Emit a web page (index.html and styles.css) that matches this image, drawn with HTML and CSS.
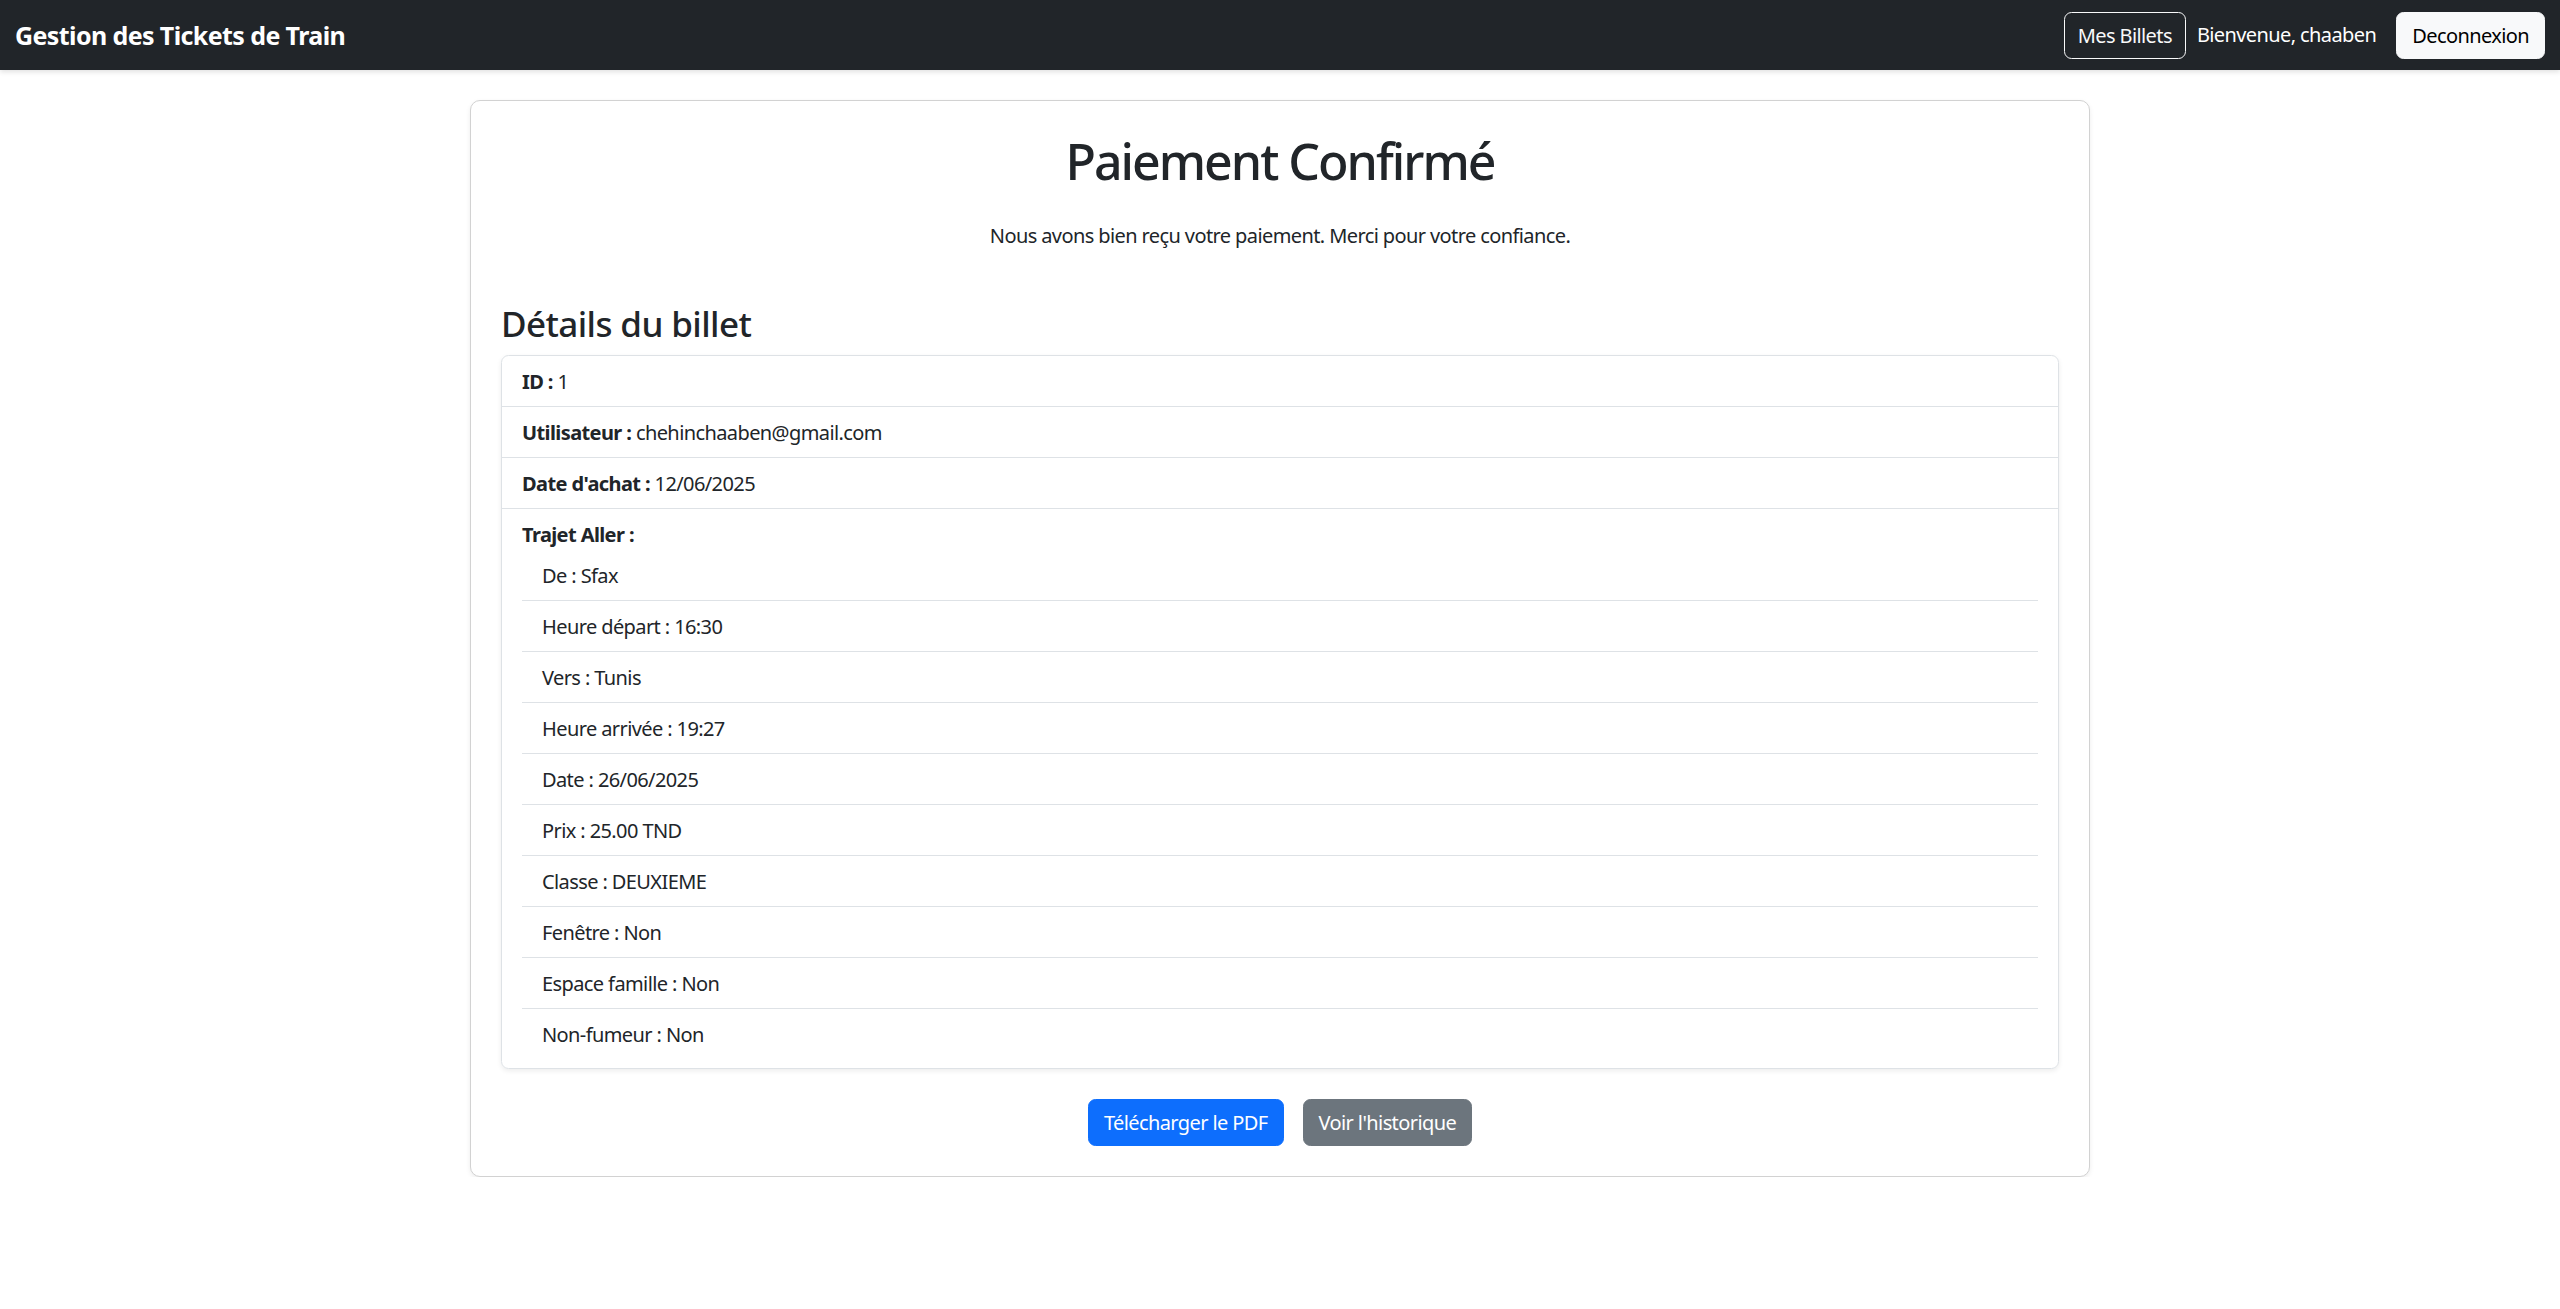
FILE: index.html
```html
<!DOCTYPE html>
<html lang="fr">
<head>
<meta charset="utf-8">
<title>Paiement Confirmé</title>
<link rel="stylesheet" href="styles.css">
</head>
<body>
<nav class="navbar">
  <a class="brand" href="#">Gestion des Tickets de Train</a>
  <div class="nav-right">
    <a class="btn btn-outline-light" href="#">Mes Billets</a>
    <span class="welcome">Bienvenue, chaaben</span>
    <a class="btn btn-light" href="#">Deconnexion</a>
  </div>
</nav>

<main class="container">
  <div class="card">
    <h1 class="title">Paiement Confirmé</h1>
    <p class="lead-text">Nous avons bien reçu votre paiement. Merci pour votre confiance.</p>

    <h3 class="section-title">Détails du billet</h3>
    <ul class="list-group">
      <li class="list-item"><strong>ID :</strong> 1</li>
      <li class="list-item"><strong>Utilisateur :</strong> chehinchaaben@gmail.com</li>
      <li class="list-item"><strong>Date d'achat :</strong> 12/06/2025</li>
      <li class="list-item">
        <strong>Trajet Aller :</strong>
        <ul class="list-flush">
          <li class="flush-item">De : Sfax</li>
          <li class="flush-item">Heure départ : 16:30</li>
          <li class="flush-item">Vers : Tunis</li>
          <li class="flush-item">Heure arrivée : 19:27</li>
          <li class="flush-item">Date : 26/06/2025</li>
          <li class="flush-item">Prix : 25.00 TND</li>
          <li class="flush-item">Classe : DEUXIEME</li>
          <li class="flush-item">Fenêtre : Non</li>
          <li class="flush-item">Espace famille : Non</li>
          <li class="flush-item">Non-fumeur : Non</li>
        </ul>
      </li>
    </ul>

    <div class="actions">
      <a class="btn btn-primary" href="#">Télécharger le PDF</a>
      <a class="btn btn-secondary" href="#">Voir l'historique</a>
    </div>
  </div>
</main>
</body>
</html>
```
FILE: styles.css
```css
html, body {
  margin: 0;
  padding: 0;
  background: #fff;
}

body {
  font-family: "Noto Sans", "Open Sans", sans-serif;
  font-size: 20px;
  line-height: 30px;
  letter-spacing: -0.03em;
  color: #212529;
}

a { text-decoration: none; }

/* Navbar */
.navbar {
  height: 70px;
  box-sizing: border-box;
  padding: 0 15px;
  background: #212529;
  display: flex;
  align-items: center;
  justify-content: space-between;
  box-shadow: 0 2px 5px rgba(0, 0, 0, 0.12);
}

.brand {
  color: #fff;
  font-size: 25px;
  line-height: 37px;
  font-weight: 700;
}

.nav-right {
  display: flex;
  align-items: center;
}

.welcome {
  color: #fff;
  margin: 0 20px 0 11px;
}

/* Buttons */
.btn {
  display: inline-block;
  box-sizing: border-box;
  height: 47px;
  padding: 8px 15px 7px;
  border: 1px solid transparent;
  border-radius: 7.5px;
  font-size: 20px;
  line-height: 30px;
  text-align: center;
}

.btn-outline-light {
  color: #f8f9fa;
  border-color: #f8f9fa;
  padding: 8px 13px 7px;
}

.btn-light {
  color: #000;
  background: #f8f9fa;
  border-color: #f8f9fa;
}

.btn-primary {
  color: #fff;
  background: #0d6efd;
  border-color: #0d6efd;
}

.btn-secondary {
  color: #fff;
  background: #6c757d;
  border-color: #6c757d;
}

/* Content */
.container {
  width: 1620px;
  margin: 30px auto 0;
}

.card {
  border: 1px solid #d2d2d2;
  border-radius: 10px;
  padding: 30px;
  background: #fff;
  box-shadow: 0 2px 5px rgba(0, 0, 0, 0.075);
}

.title {
  margin: 0 0 30px;
  font-size: 50px;
  line-height: 60px;
  font-weight: 500;
  letter-spacing: -0.04em;
  text-align: center;
}

.lead-text {
  margin: 0 0 20px;
  text-align: center;
}

.section-title {
  margin: 52px 0 10px;
  font-size: 35px;
  line-height: 42px;
  font-weight: 500;
}

.list-group {
  list-style: none;
  margin: 0;
  padding: 0;
  border: 1px solid #dee2e6;
  border-radius: 7.5px;
  box-shadow: 0 2px 5px rgba(0, 0, 0, 0.075);
}

.list-item {
  padding: 11px 20px 9px;
  border-bottom: 1px solid #dee2e6;
}

.list-item:last-child {
  border-bottom: 0;
}

.list-item strong {
  font-weight: 700;
}

.list-flush {
  list-style: none;
  margin: 0;
  padding: 0;
}

.flush-item {
  padding: 11px 20px 9px;
  border-bottom: 1px solid #dee2e6;
}

.flush-item:last-child {
  border-bottom: 0;
}

.actions {
  margin-top: 30px;
  display: flex;
  justify-content: center;
  gap: 19px;
}
```
